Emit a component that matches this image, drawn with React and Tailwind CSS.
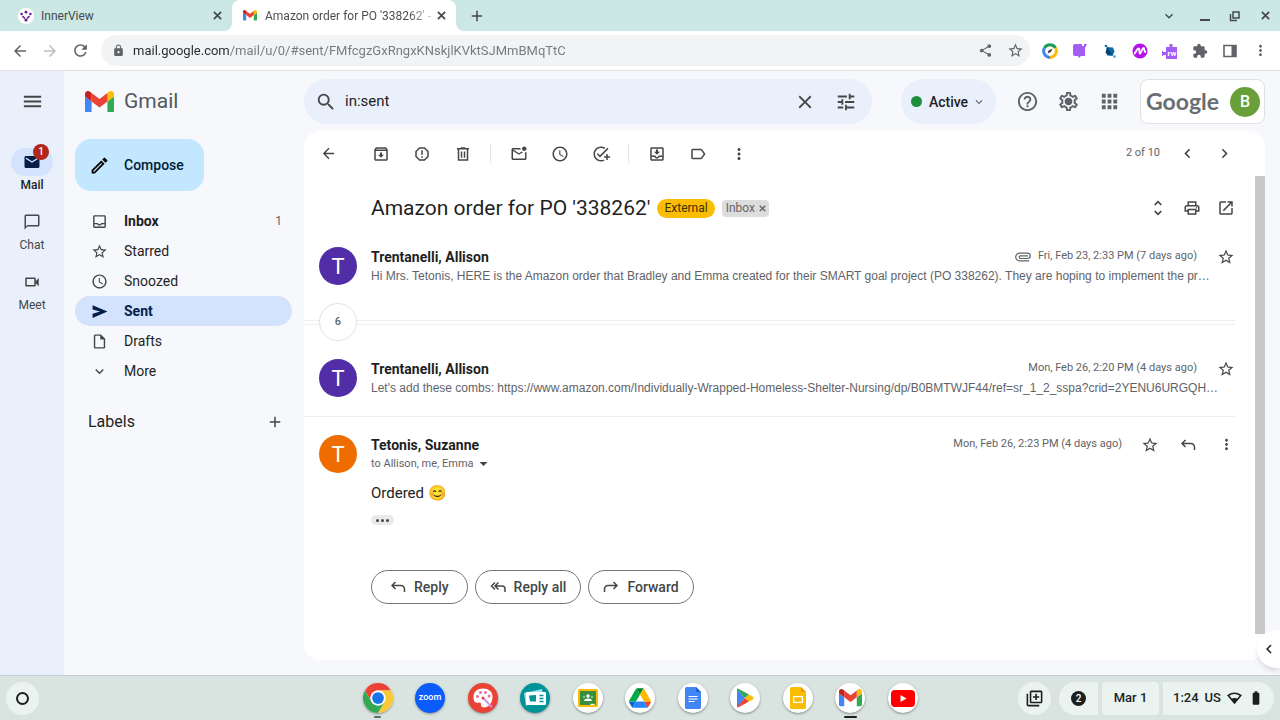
import { useState } from "react";
import {
  MdAdd,
  MdAddTask,
  MdApps,
  MdArrowBack,
  MdArrowDropDown,
  MdArrowForward,
  MdBatteryFull,
  MdChevronLeft,
  MdChevronRight,
  MdClose,
  MdExpandMore,
  MdExtension,
  MdHelpOutline,
  MdLock,
  MdMenu,
  MdMoreVert,
  MdOpenInNew,
  MdOutlineArchive,
  MdOutlineChatBubbleOutline,
  MdOutlineEdit,
  MdOutlineInbox,
  MdOutlineInsertDriveFile,
  MdOutlineLabel,
  MdOutlineLibraryAdd,
  MdOutlineMarkEmailUnread,
  MdOutlineMoveToInbox,
  MdOutlinePrint,
  MdOutlineSettings,
  MdOutlineVideocam,
  MdRefresh,
  MdReportGmailerrorred,
  MdSchedule,
  MdSearch,
  MdMail,
  MdShare,
  MdStarBorder,
  MdTune,
  MdUnfoldMore,
} from "react-icons/md";

const navItems = [
  { label: "Inbox", icon: MdOutlineInbox, count: 1, bold: true },
  { label: "Starred", icon: MdStarBorder },
  { label: "Snoozed", icon: MdSchedule },
  { label: "Sent", icon: SendIcon, active: true },
  { label: "Drafts", icon: MdOutlineInsertDriveFile },
  { label: "More", icon: MdExpandMore },
];

function IconButton({ label, className = "w-8 h-8", children }) {
  return (
    <button type="button" aria-label={label} className={`flex shrink-0 items-center justify-center ${className}`}>
      {children}
    </button>
  );
}

function CloseIcon({ className = "h-[9px] w-[9px]" }) {
  return (
    <svg viewBox="0 0 10 10" className={className} stroke="currentColor" strokeWidth="1.900" aria-hidden="true">
      <path d="m1 1 8 8M9 1 1 9" />
    </svg>
  );
}

function SendIcon({ size = 16, className = "" }) {
  return (
    <svg viewBox="0 0 16 16" width={size} height={size} fill="currentColor" className={className} aria-hidden="true">
      <path d="M1.500 2 15.500 8 1.500 14V10L8.500 8 1.500 6z" />
    </svg>
  );
}

function TrashIcon({ size = 16 }) {
  return (
    <svg viewBox="0 0 24 24" width={size} height={size} fill="none" stroke="currentColor" strokeWidth="2" aria-hidden="true">
      <path d="M4 5h16M9 4h6M6 5v15h12V5M10 8.500v8.500M14 8.500v8.500" />
    </svg>
  );
}

function GmailLogo({ className }) {
  return (
    <svg viewBox="52 42 88 66" className={className} aria-hidden="true">
      <path fill="#4285f4" d="M58 108h14V74L52 59v43c0 3.32 2.69 6 6 6" />
      <path fill="#34a853" d="M120 108h14c3.32 0 6-2.69 6-6V59l-20 15" />
      <path fill="#fbbc04" d="M120 48v26l20-15v-8c0-7.42-8.47-11.65-14.4-7.2" />
      <path fill="#ea4335" d="M72 74V48l24 18 24-18v26L96 92" />
      <path fill="#c5221f" d="M52 51v8l20 15V48l-5.6-4.2c-5.94-4.45-14.4-.22-14.4 7.2" />
    </svg>
  );
}

function ReplyIcon({ all = false, className = "" }) {
  return (
    <svg viewBox="0 0 16 16" className={`h-4 w-4 ${className}`} fill="none" stroke="currentColor" strokeWidth="1.5" aria-hidden="true">
      {all ? (
        <path d="M5 3.5 1.5 7 5 10.5M8.5 3.5 5 7l3.500 3.500M5.500 7h6.500a3 3 0 0 1 3 3v3" />
      ) : (
        <path d="M5.500 3 2 6.500 5.500 10M2 6.500h9a3.500 3.500 0 0 1 3.500 3.500v3" />
      )}
    </svg>
  );
}

function TabStrip() {
  return (
    <div className="flex h-[31px] text-xs text-[#45494d]">
      <div className="flex w-[232px] items-center rounded-br-lg bg-[#cbe8e5] pl-[18px] pr-[7px]">
        <svg viewBox="0 0 16 16" className="mr-[7px] h-4 w-4 shrink-0" aria-hidden="true">
          <circle cx="8" cy="8" r="8" fill="#fff" />
          <g fill="#6a1b9a">
            <circle cx="3.600" cy="6" r="1.300" />
            <circle cx="8" cy="4.200" r="1.400" />
            <circle cx="12.400" cy="6" r="1.300" />
            <circle cx="8" cy="12" r="1.600" />
          </g>
          <path d="M4.500 8.200 7 10.500M11.500 8.200 9 10.500" stroke="#6a1b9a" strokeWidth="1.600" />
        </svg>
        <span className="flex-1">InnerView</span>
        <IconButton label="Close InnerView" className="h-4 w-4">
          <CloseIcon />
        </IconButton>
      </div>
      <div className="bg-[#cbe8e5]">
        <div className="flex h-full w-[224px] items-center rounded-t-lg bg-white pl-[11px] pr-[7px]">
          <GmailLogo className="mr-2 w-[14px] shrink-0" />
          <span className="flex-1 bg-linear-to-r from-[#45494d] from-85% to-[#d5d7d9] bg-clip-text whitespace-nowrap text-transparent">
            Amazon order for PO '338262' -
          </span>
          <IconButton label="Close mail tab" className="h-4 w-4">
            <CloseIcon />
          </IconButton>
        </div>
      </div>
      <div className="flex flex-1 items-center rounded-bl-lg bg-[#cbe8e5] pl-[11px]">
        <IconButton label="New tab" className="h-5 w-5">
          <MdAdd size={18} />
        </IconButton>
        <div className="ml-auto flex items-center">
          <IconButton label="Search tabs" className="mr-[6px] h-[30px] w-[30px]">
            <MdExpandMore size={16} />
          </IconButton>
          <IconButton label="Minimize" className="h-[30px] w-[30px]">
            <svg viewBox="0 0 12 12" className="h-3 w-3" stroke="currentColor" strokeWidth="2">
              <path d="M1 10h10" />
            </svg>
          </IconButton>
          <IconButton label="Restore" className="h-[30px] w-[30px]">
            <svg viewBox="0 0 12 12" className="h-3 w-3" fill="none" stroke="currentColor" strokeWidth="1.500">
              <path d="M4 2h6v6H4zM1.500 4v6.500H8" />
            </svg>
          </IconButton>
          <IconButton label="Close window" className="h-[30px] w-[30px]">
            <CloseIcon />
          </IconButton>
        </div>
      </div>
    </div>
  );
}

function AddressBar() {
  return (
    <div className="flex h-10 items-center border-b border-[#dfe1e3] px-[5px] text-[#5f6368]">
      <IconButton label="Back" className="h-[30px] w-[30px]">
        <MdArrowBack size={18} />
      </IconButton>
      <IconButton label="Forward" className="h-[30px] w-[30px] text-[#bcbec1]">
        <MdArrowForward size={18} />
      </IconButton>
      <IconButton label="Reload" className="mr-[6px] h-[30px] w-[30px]">
        <MdRefresh size={19} />
      </IconButton>
      <div className="flex h-[31px] flex-1 items-center rounded-full bg-[#f1f3f4] pl-[11px]">
        <MdLock size={13} className="mr-2 shrink-0" />
        <input
          aria-label="Address"
          defaultValue="mail.google.com/mail/u/0/#sent/FMfcgzGxRngxKNskjlKVktSJMmBMqTtC"
          className="min-w-0 flex-1 bg-[linear-gradient(90deg,#27292c_97px,#75787c_97px)] bg-clip-text text-[13px] text-transparent outline-none"
        />
        <IconButton label="Share" className="h-[30px] w-[30px]">
          <MdShare size={15} />
        </IconButton>
        <IconButton label="Bookmark" className="h-[30px] w-[30px]">
          <MdStarBorder size={17} />
        </IconButton>
      </div>
      <div className="flex pl-[5px]">
        <IconButton label="Screen recorder" className="h-[30px] w-[30px]">
          <svg viewBox="0 0 16 16" className="h-4 w-4" fill="none" strokeWidth="3">
            <path d="M2.400 5A6.400 6.400 0 0 1 13.600 5" stroke="#1e9e57" />
            <path d="M13.600 5A6.400 6.400 0 0 1 8 14.400" stroke="#fbbc04" />
            <path d="M8 14.400A6.400 6.400 0 0 1 2.400 5" stroke="#4285f4" />
            <path d="m5.500 10.500 1-3 4-2-1.500 3.500z" fill="#444" />
          </svg>
        </IconButton>
        <IconButton label="Read aloud" className="h-[30px] w-[30px]">
          <svg viewBox="0 0 16 16" className="h-4 w-4" fill="#a35df5">
            <path d="M3 1h7v2h2V1h3l-2 4v8H9l-2 2-1-2H3a2 2 0 0 1-2-2V3a2 2 0 0 1 2-2z" />
          </svg>
        </IconButton>
        <IconButton label="Connector" className="h-[30px] w-[30px]">
          <svg viewBox="0 0 16 16" className="h-4 w-4" fill="#0b6aa8">
            <path d="m5 4 6 .5 1.500 4-2 4.500-5-.5-2-3z" />
            <path d="m5 4 5 7-4 1-2-3z" fill="#0a3f6b" />
            <circle cx="4" cy="3" r="1.300" />
            <circle cx="12.500" cy="13.500" r="1.300" fill="#2aa5dd" />
          </svg>
        </IconButton>
        <IconButton label="Mote" className="h-[30px] w-[30px]">
          <svg viewBox="0 0 16 16" className="h-4 w-4">
            <circle cx="8" cy="8" r="7.500" fill="#b312e8" />
            <path d="M2 10.500c2 0 2.500-5 4.500-5s0 5 1.500 5 2-5.500 3.500-5.500 0 4 2.500 4" fill="none" stroke="#fff" strokeWidth="1.800" />
          </svg>
        </IconButton>
        <IconButton label="Read and write" className="h-[30px] w-[30px]">
          <span className="relative flex h-4 w-4 items-end justify-end">
            <svg viewBox="0 0 16 16" className="absolute h-4 w-4">
              <path d="M4 4h3.500V1h3v3H15v12H4v-4H1v1H0V8h1v1h3z" fill="#a35df5" />
            </svg>
            <span className="relative w-3 text-center text-[8px] leading-[11px] font-bold text-white">rw</span>
          </span>
        </IconButton>
        <IconButton label="Extensions" className="h-[30px] w-[30px]">
          <MdExtension size={16} />
        </IconButton>
        <IconButton label="Side panel" className="h-[30px] w-[30px]">
          <svg viewBox="0 0 14 14" className="h-[14px] w-[14px]">
            <path d="M1 1.500h12v11H1z" fill="none" stroke="currentColor" strokeWidth="1.600" />
            <path d="M8.500 1.500H13v11H8.500z" fill="currentColor" />
          </svg>
        </IconButton>
        <IconButton label="Browser menu" className="h-[30px] w-[30px]">
          <MdMoreVert size={17} />
        </IconButton>
      </div>
    </div>
  );
}

function Rail() {
  const apps = [
    { label: "Mail", icon: MdMail, active: true },
    { label: "Chat", icon: MdOutlineChatBubbleOutline },
    { label: "Meet", icon: MdOutlineVideocam },
  ];

  return (
    <nav aria-label="Apps" className="flex w-16 shrink-0 flex-col items-center bg-[#e9f0fb] pt-[14px] text-[#444746]">
      <IconButton label="Main menu">
        <MdMenu size={23} />
      </IconButton>
      <div className="mt-[31px] flex flex-col gap-[14px]">
        {apps.map(({ label, icon: Icon, active }) => (
          <a key={label} href={`#${label.toLowerCase()}`} className="flex flex-col items-center text-xs leading-[18px]">
            <span
              className={`relative flex h-7 w-[42px] items-center justify-center rounded-full ${
                active ? "bg-[#d3e3fd] text-[#041e49]" : ""
              }`}
            >
              <Icon size={18} />
              {active && (
                <span className="absolute -top-1 right-1 flex h-4 w-4 items-center justify-center rounded-full bg-[#b3261e] text-[10px] font-medium text-white">
                  1
                </span>
              )}
            </span>
            <span className={active ? "font-medium text-[#1f1f1f]" : ""}>{label}</span>
          </a>
        ))}
      </div>
    </nav>
  );
}

function Header() {
  const [query, setQuery] = useState("in:sent");

  return (
    <header className="flex h-[60px] shrink-0 items-start pr-[15px] pt-2">
      <div className="flex h-[45px] w-60 shrink-0 items-center gap-[10px] pl-[21px]">
        <GmailLogo className="w-[29px]" />
        <span className="text-[21px] text-[#54585c]">Gmail</span>
      </div>
      <form role="search" className="flex h-[45px] min-w-0 flex-1 items-center rounded-full bg-[#e9f0fb] pl-[10px] pr-[6px] text-[#444746]">
        <IconButton label="Search mail" className="h-6 w-6">
          <MdSearch size={22} />
        </IconButton>
        <input
          aria-label="Search"
          value={query}
          onChange={(e) => setQuery(e.target.value)}
          className="ml-[7px] min-w-0 flex-1 text-[15px] text-[#1f1f1f] outline-none"
        />
        <IconButton label="Clear search" className="h-10 w-[41px]">
          <MdClose size={22} />
        </IconButton>
        <IconButton label="Search options" className="h-10 w-[41px]">
          <MdTune size={22} />
        </IconButton>
      </form>
      <button type="button" className="ml-[29px] flex h-[45px] w-[95px] shrink-0 items-center justify-center rounded-full bg-[#e9f0fb] text-sm font-medium text-[#1f1f1f]">
        <span className="mr-[7px] h-[11px] w-[11px] rounded-full bg-[#1e8e3e]" />
        Active
        <MdExpandMore size={14} className="ml-1 text-[#5f6368]" />
      </button>
      <div className="ml-[11px] flex h-[45px] items-center text-[#5f6368]">
        <IconButton label="Support" className="h-10 w-[41px]">
          <MdHelpOutline size={23} />
        </IconButton>
        <IconButton label="Settings" className="h-10 w-[41px]">
          <svg viewBox="0 0 24 24" className="h-[23px] w-[23px]">
            <MdOutlineSettings size={24} />
            <circle cx="12" cy="12" r="3" fill="currentColor" />
          </svg>
        </IconButton>
        <IconButton label="Google apps" className="h-10 w-[41px]">
          <MdApps size={23} />
        </IconButton>
      </div>
      <button
        type="button"
        aria-label="Google account"
        className="ml-[10px] flex h-[45px] w-[125px] shrink-0 items-center justify-between rounded-lg border border-[#dfe1e5] bg-white pl-[5px] pr-1"
      >
        <span className="font-['Lato',sans-serif] text-[23px] font-bold text-[#6a6e72]">Google</span>
        <span className="flex h-[30px] w-[30px] items-center justify-center rounded-full bg-[#689f38] text-base font-medium text-white">
          B
        </span>
      </button>
    </header>
  );
}

function Sidebar() {
  return (
    <aside className="w-60 shrink-0 pl-[11px] pr-3 pt-2 text-sm text-[#1f1f1f]">
      <button type="button" className="flex h-[52px] w-[129px] items-center gap-[14px] rounded-2xl bg-[#c2e7ff] pl-[14px] font-medium text-[#001d35]">
        <MdOutlineEdit size={21} className="text-black" />
        Compose
      </button>
      <nav aria-label="Mailboxes" className="mt-[15px]">
        {navItems.map(({ label, icon: Icon, count, bold, active }) => (
          <a
            key={label}
            href={`#${label.toLowerCase()}`}
            className={`flex h-[30px] items-center rounded-full pl-4 pr-[10px] ${
              active ? "bg-[#d3e3fd] font-bold text-[#041e49]" : ""
            } ${bold ? "font-bold" : ""}`}
          >
            <Icon size={17} className={active ? "" : "text-[#444746]"} />
            <span className="ml-4 flex-1">{label}</span>
            {count && <span className="text-xs font-normal text-[#5f6368]">{count}</span>}
          </a>
        ))}
      </nav>
      <div className="mt-6 flex items-center pl-[13px] pr-2">
        <h2 className="flex-1 text-base">Labels</h2>
        <IconButton label="Create label" className="h-[18px] w-[18px] text-[#444746]">
          <MdAdd size={18} />
        </IconButton>
      </div>
    </aside>
  );
}

function MailToolbar() {
  const groups = [
    [
      ["Archive", MdOutlineArchive],
      ["Report spam", MdReportGmailerrorred],
      ["Delete", TrashIcon],
    ],
    [
      ["Mark as unread", MdOutlineMarkEmailUnread],
      ["Snooze", MdSchedule],
      ["Add to tasks", MdAddTask],
    ],
    [
      ["Move to", MdOutlineMoveToInbox],
      ["Labels", MdOutlineLabel],
      ["More actions", MdMoreVert],
    ],
  ];

  return (
    <div className="flex h-[45px] shrink-0 items-center pl-2 pr-[22px] text-[#444746]">
      <IconButton label="Back to Sent">
        <MdArrowBack size={17} />
      </IconButton>
      <div className="ml-4 flex items-center">
        {groups.map((group, i) => (
          <div key={i} className="flex items-center">
            {i > 0 && <span className="mx-[7px] h-[19px] w-px bg-[#e4e6e8]" />}
            {group.map(([label, Icon]) => (
              <IconButton key={label} label={label} className="h-8 w-[41px]">
                <Icon size={18} />
              </IconButton>
            ))}
          </div>
        ))}
      </div>
      <span className="ml-auto mr-[9px] text-[11px] text-[#5f6368]">2 of 10</span>
      <IconButton label="Newer" className="h-8 w-[37px]">
        <MdChevronLeft size={19} />
      </IconButton>
      <IconButton label="Older" className="h-8 w-[37px]">
        <MdChevronRight size={19} />
      </IconButton>
    </div>
  );
}

function Avatar({ className }) {
  return (
    <span className={`mr-[14px] flex h-[38px] w-[38px] shrink-0 items-center justify-center rounded-full text-[22px] text-white ${className}`}>
      T
    </span>
  );
}

function CollapsedMessage({ sender, date, snippet, attachment }) {
  return (
    <article className="flex pl-[15px]">
      <Avatar className="bg-[#512da8]" />
      <div className="min-w-0 flex-1">
        <div className="flex h-[19px] items-center">
          <h3 className="text-sm font-bold text-[#1f1f1f]">{sender}</h3>
          {attachment && (
            <svg viewBox="0 0 16 10" className="ml-auto mr-[7px] h-[10px] w-4" fill="none" stroke="#5f6368" strokeWidth="1.200" role="img" aria-label="Has attachment">
              <path d="M14 8.800H4.500a3.800 3.800 0 0 1 0-7.600h8a2.600 2.600 0 0 1 0 5.300H5.500a1.300 1.300 0 0 1 0-2.700H13" />
            </svg>
          )}
          <time className={`text-[11px] text-[#5f6368] ${attachment ? "" : "ml-auto"}`}>{date}</time>
          <IconButton label="Star message" className="ml-5 h-[18px] w-[18px] text-[#444746]">
            <MdStarBorder size={18} />
          </IconButton>
        </div>
        <p className="truncate font-['Liberation_Sans',Arial,sans-serif] text-xs leading-[20px] text-[#5f6368]">{snippet}</p>
      </div>
    </article>
  );
}

function Thread() {
  return (
    <div className="min-w-0 flex-1 pr-5">
      <div className="flex items-center pl-[67px] pt-4">
        <h1 className="text-[21px] leading-8 text-[#1f1f1f]">Amazon order for PO '338262'</h1>
        <span className="ml-[7px] rounded-full bg-[#fbbc04] px-[7px] text-xs leading-[19px] text-[#3c3000]">External</span>
        <span className="ml-[7px] flex items-center gap-1 rounded bg-[#ddd] pl-1 pr-[3px] text-xs leading-[17px] text-[#666]">
          Inbox
          <button type="button" aria-label="Remove Inbox label">
            <CloseIcon className="h-[7px] w-[7px]" />
          </button>
        </span>
        <div className="-mr-2 ml-auto flex text-[#444746]">
          <IconButton label="Expand all" className="h-8 w-[34px]">
            <MdUnfoldMore size={20} />
          </IconButton>
          <IconButton label="Print all" className="h-8 w-[34px]">
            <MdOutlinePrint size={18} />
          </IconButton>
          <IconButton label="Open in new window" className="h-8 w-[34px]">
            <MdOpenInNew size={18} />
          </IconButton>
        </div>
      </div>

      <div className="mt-[23px]">
        <CollapsedMessage
          sender="Trentanelli, Allison"
          date="Fri, Feb 23, 2:33 PM (7 days ago)"
          attachment
          snippet="Hi Mrs. Tetonis, HERE is the Amazon order that Bradley and Emma created for their SMART goal project (PO 338262). They are hoping to implement the pr…"
        />
      </div>
      <div className="mt-[17px] flex items-center">
        <span className="h-[5px] w-[15px] border-y border-[#eceef0]" />
        <button
          type="button"
          aria-label="Show 6 more messages"
          className="h-[38px] w-[38px] rounded-full border border-[#dfe1e3] text-[11px] font-medium text-[#5f6368]"
        >
          6
        </button>
        <span className="h-[5px] flex-1 border-y border-[#eceef0]" />
      </div>
      <div className="mt-[18px] border-b border-[#eceef0] pb-[18px]">
        <CollapsedMessage
          sender="Trentanelli, Allison"
          date="Mon, Feb 26, 2:20 PM (4 days ago)"
          snippet="Let's add these combs: https://www.amazon.com/Individually-Wrapped-Homeless-Shelter-Nursing/dp/B0BMTWJF44/ref=sr_1_2_sspa?crid=2YENU6URGQH…"
        />
      </div>

      <article className="mt-[18px] flex pl-[15px]">
        <Avatar className="bg-[#ef6c00]" />
        <div className="min-w-0 flex-1">
          <div className="flex h-[19px] items-center">
            <h3 className="text-sm font-bold text-[#1f1f1f]">Tetonis, Suzanne</h3>
            <time className="ml-auto text-[11px] text-[#5f6368]">Mon, Feb 26, 2:23 PM (4 days ago)</time>
            <div className="-mr-[10px] ml-[9px] flex text-[#444746]">
              <IconButton label="Star message" className="h-[18px] w-[38px]">
                <MdStarBorder size={18} />
              </IconButton>
              <IconButton label="Reply to message" className="h-[18px] w-[38px]">
                <ReplyIcon />
              </IconButton>
              <IconButton label="Message menu" className="h-[18px] w-[38px]">
                <MdMoreVert size={17} />
              </IconButton>
            </div>
          </div>
          <button type="button" className="flex items-center text-[11px] leading-[18px] text-[#5f6368]">
            to Allison, me, Emma
            <MdArrowDropDown size={19} className="text-[#444746]" />
          </button>
          <p className="mt-2 flex items-center gap-1 text-[15px] leading-6 text-[#222]">
            Ordered <span>😊</span>
          </p>
          <button type="button" aria-label="Show trimmed content" className="mt-[10px] flex h-[10px] w-[23px] items-center justify-center gap-[2px] rounded-full bg-[#e8eaed]">
            <span className="h-[3px] w-[3px] rounded-full bg-[#444746]" />
            <span className="h-[3px] w-[3px] rounded-full bg-[#444746]" />
            <span className="h-[3px] w-[3px] rounded-full bg-[#444746]" />
          </button>
          <div className="mt-[45px] flex gap-[7px] text-sm font-medium text-[#444746]">
            <button type="button" className="flex h-[34px] items-center gap-2 rounded-full border border-[#747775] px-[18px]">
              <ReplyIcon />
              Reply
            </button>
            <button type="button" className="flex h-[34px] items-center gap-2 rounded-full border border-[#747775] px-[14px]">
              <ReplyIcon all />
              Reply all
            </button>
            <button type="button" className="flex h-[34px] items-center gap-2 rounded-full border border-[#747775] px-[14px]">
              <ReplyIcon className="-scale-x-100" />
              Forward
            </button>
          </div>
        </div>
      </article>
    </div>
  );
}

function ShelfApp({ label, className = "bg-white", running, children }) {
  return (
    <button
      type="button"
      aria-label={label}
      className={`relative flex h-[30px] w-[30px] items-center justify-center rounded-full shadow-sm shadow-black/30 ${className}`}
    >
      {children}
      {running && <span className={`absolute -bottom-[5px] h-[2px] rounded-full ${running}`} />}
    </button>
  );
}

function Shelf() {
  return (
    <footer className="grid h-[45px] grid-cols-[1fr_auto_1fr] items-center border-t border-[#c5cfcd] bg-[#d9e4e1] pl-[6px] pr-[6px] text-[#1b1f1e]">
      <button type="button" aria-label="Launcher" className="flex h-[33px] w-[33px] items-center justify-center rounded-full bg-[#ebf3f1]">
        <span className="h-[13px] w-[13px] rounded-full border-2 border-current" />
      </button>
      <div className="flex w-[555px] justify-between">
        <ShelfApp label="Chrome" running="w-[7px] bg-[#5b6a67]">
          <svg viewBox="0 0 48 48" className="h-[30px] w-[30px]">
            <path fill="#ea4335" d="M24 12h20.800A24 24 0 0 0 3.200 12l10.400 18A12 12 0 0 1 24 12" />
            <path fill="#fbc934" d="M34.400 30 24 48a24 24 0 0 0 20.800-36H24a12 12 0 0 1 10.400 18" />
            <path fill="#34a853" d="M13.600 30 3.200 12A24 24 0 0 0 24 48l10.400-18a12 12 0 0 1-20.800 0" />
            <circle cx="24" cy="24" r="12" fill="#fff" />
            <circle cx="24" cy="24" r="9.400" fill="#1a73e8" />
          </svg>
        </ShelfApp>
        <ShelfApp label="Zoom" className="bg-[#0b5cff]">
          <span className="text-[9px] font-medium text-white">zoom</span>
        </ShelfApp>
        <ShelfApp label="Canvas" className="bg-[#ea4335]">
          <svg viewBox="0 0 20 20" className="h-5 w-5">
            <path fill="#fff" d="M10 .5c5.500 0 9.500 3.200 9.500 8 0 5-2 9-6 10.500-3 1-5.500 0-5.500-2 0-1.500 0-2.500-1.500-2.500-2 .5-3.500.5-5-1C.8 12.500.500 10.500.500 8.500.500 4 4.500.5 10 .5" />
            <g fill="#f06a9b">
              <circle cx="4.500" cy="8.500" r="1.500" />
              <circle cx="7.500" cy="4.500" r="1.500" />
              <circle cx="12.500" cy="4.500" r="1.500" />
              <circle cx="16" cy="8" r="1.500" />
            </g>
            <path d="m9.500 9.500 9.500 9.500" stroke="#d291f0" strokeWidth="2" />
            <circle cx="10" cy="10" r="1.500" fill="#ea4335" />
          </svg>
        </ShelfApp>
        <ShelfApp label="Screencast" className="bg-[#009499]">
          <svg viewBox="0 0 22 18" className="h-[18px] w-[22px]">
            <path fill="#9adfe6" d="m0 4 18-4 1 5-17 12z" />
            <rect x="2" y="3" width="20" height="13" rx="1" fill="#fff" />
            <path d="M5 6.500 12 6v6.500H6z" fill="#009499" />
            <path d="M15.500 6.500h4M15.500 9.500h4M15.500 12.500h4" stroke="#009499" strokeWidth="1.300" />
          </svg>
        </ShelfApp>
        <ShelfApp label="Classroom">
          <svg viewBox="0 0 20 18" className="h-[18px] w-5">
            <rect width="20" height="18" rx="1.500" fill="#fbbc04" />
            <rect x="2" y="2" width="16" height="14" fill="#388e3c" />
            <g fill="#fff">
              <circle cx="10" cy="7" r="1.700" />
              <path d="M6 12q0-2.500 4-2.500t4 2.500z" />
              <rect x="12.500" y="14.800" width="4" height="1.200" />
            </g>
            <g fill="#81c784">
              <circle cx="6" cy="8" r="1.200" />
              <circle cx="14" cy="8" r="1.200" />
            </g>
          </svg>
        </ShelfApp>
        <ShelfApp label="Drive">
          <svg viewBox="0 0 87.300 78" className="h-5 w-[22px]">
            <path d="m6.600 66.850 3.850 6.650c.8 1.400 1.950 2.500 3.300 3.300L27.500 53H0c0 1.550.4 3.100 1.200 4.500z" fill="#0066da" />
            <path d="M43.650 25 29.900 1.200c-1.350.8-2.500 1.900-3.300 3.300l-25.400 44A9 9 0 0 0 0 53h27.500z" fill="#00ac47" />
            <path d="M73.550 76.800c1.350-.8 2.500-1.900 3.300-3.300l9.250-16c.8-1.400 1.200-2.950 1.200-4.500H59.800l5.850 11.500z" fill="#ea4335" />
            <path d="M43.650 25 57.400 1.200C56.050.4 54.500 0 52.900 0H34.400c-1.600 0-3.150.45-4.500 1.200z" fill="#00832d" />
            <path d="M59.800 53H27.500L13.750 76.800c1.350.8 2.900 1.200 4.500 1.200h50.800c1.600 0 3.150-.45 4.500-1.200z" fill="#2684fc" />
            <path d="m73.400 26.500-12.700-22c-.8-1.400-1.950-2.500-3.300-3.300L43.650 25 59.800 53h27.450c0-1.550-.4-3.100-1.200-4.500z" fill="#ffba00" />
          </svg>
        </ShelfApp>
        <ShelfApp label="Docs">
          <svg viewBox="0 0 16 22" className="h-[22px] w-4">
            <path d="M1.500 0H11l5 5v15.500a1.500 1.500 0 0 1-1.500 1.500h-13A1.500 1.500 0 0 1 0 20.500v-19A1.500 1.500 0 0 1 1.500 0" fill="#4285f4" />
            <path d="M11 0v5h5z" fill="#1967d2" />
            <path d="M3.500 9.500h9M3.500 12h9M3.500 14.500h6" stroke="#fff" strokeWidth="1.200" />
          </svg>
        </ShelfApp>
        <ShelfApp label="Play Store">
          <svg viewBox="0 0 18 20" className="h-5 w-[18px]">
            <path d="M1 1v18l8-9z" fill="#4285f4" />
            <path d="M1 1.500Q1 0 3 1l10 5.500L9 10z" fill="#34a853" />
            <path d="M1 18.500Q1 20 3 19l10-5.500L9 10z" fill="#ea4335" />
            <path d="m13 6.500 4 2.300q1.500 1.200 0 2.400l-4 2.300L9 10z" fill="#fbbc04" />
          </svg>
        </ShelfApp>
        <ShelfApp label="Slides">
          <svg viewBox="0 0 16 22" className="h-[22px] w-4">
            <path d="M1.500 0H11l5 5v15.500a1.500 1.500 0 0 1-1.500 1.500h-13A1.500 1.500 0 0 1 0 20.500v-19A1.500 1.500 0 0 1 1.500 0" fill="#fbbc04" />
            <path d="M11 0v5h5z" fill="#f29900" />
            <rect x="3.600" y="9.600" width="8.800" height="5.800" fill="none" stroke="#fff" strokeWidth="1.300" />
          </svg>
        </ShelfApp>
        <ShelfApp label="Gmail" running="w-[13px] bg-[#1b1f1e]">
          <GmailLogo className="w-[23px]" />
        </ShelfApp>
        <ShelfApp label="YouTube">
          <svg viewBox="0 0 24 17" className="h-[17px] w-6">
            <rect width="24" height="17" rx="4" fill="#f00" />
            <path d="m9.500 5 6 3.500-6 3.500z" fill="#fff" />
          </svg>
        </ShelfApp>
      </div>
      <div className="flex items-center justify-end gap-1 text-[13px] font-medium">
        <button type="button" aria-label="Tote" className="mr-1 flex h-[33px] w-[33px] items-center justify-center rounded-full bg-[#ebf3f1]">
          <MdOutlineLibraryAdd size={19} />
        </button>
        <button type="button" aria-label="2 notifications" className="flex h-[33px] w-[39px] items-center justify-center rounded-l-full rounded-r bg-[#ebf3f1]">
          <span className="flex h-[15px] w-[15px] items-center justify-center rounded-full bg-[#1b1f1e] text-[10px] text-white">2</span>
        </button>
        <button type="button" className="h-[33px] w-[57px] rounded bg-[#ebf3f1]">Mar 1</button>
        <button type="button" className="flex h-[33px] w-[111px] items-center justify-center gap-[6px] rounded-l rounded-r-full bg-[#ebf3f1]">
          <span>1:24</span>
          <span>US</span>
          <svg viewBox="0 0 15 12" className="h-3 w-[15px]" aria-hidden="true">
            <path d="M7.500 11 1.200 3.500q6.300-4.500 12.600 0z" fill="none" stroke="currentColor" strokeWidth="1.600" />
            <path d="M4 7q3.500-2 7 0l-3.500 4z" fill="currentColor" />
          </svg>
          <MdBatteryFull size={16} />
        </button>
      </div>
    </footer>
  );
}

export default function App() {
  return (
    <div className="flex min-h-screen flex-col overflow-x-hidden bg-white font-['Roboto',sans-serif]">
      <TabStrip />
      <AddressBar />
      <div className="relative flex flex-1 bg-[#f6f8fc]">
        <Rail />
        <div className="flex min-w-0 flex-1 flex-col">
          <Header />
          <div className="flex flex-1">
            <Sidebar />
            <main className="mb-[15px] mr-[15px] flex min-w-0 flex-1 flex-col rounded-2xl bg-white">
              <MailToolbar />
              <div className="flex flex-1">
                <Thread />
                <div className="mb-[26px] w-[10px] shrink-0 bg-[#c8c8c8]" />
              </div>
            </main>
          </div>
        </div>
        <button
          type="button"
          aria-label="Show side panel"
          className="absolute bottom-[7px] right-0 flex h-[38px] w-[23px] items-center justify-center rounded-l-full bg-white text-[#1f1f1f] shadow-md"
        >
          <MdChevronLeft size={18} />
        </button>
      </div>
      <Shelf />
    </div>
  );
}
